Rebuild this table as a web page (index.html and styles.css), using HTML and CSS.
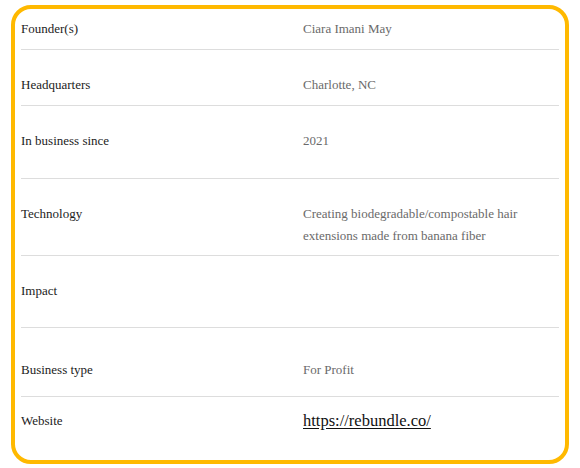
FILE: index.html
```html
<!DOCTYPE html>
<html lang="en">
<head>
<meta charset="utf-8">
<title>Rebundle</title>
<link rel="stylesheet" href="styles.css">
</head>
<body>
<div class="card">
  <div class="row r1"><div class="label">Founder(s)</div><div class="value">Ciara Imani May</div></div>
  <div class="row r2"><div class="label">Headquarters</div><div class="value">Charlotte, NC</div></div>
  <div class="row r3"><div class="label">In business since</div><div class="value">2021</div></div>
  <div class="row r4"><div class="label">Technology</div><div class="value">Creating biodegradable/compostable hair extensions made from banana fiber</div></div>
  <div class="row r5"><div class="label">Impact</div><div class="value"></div></div>
  <div class="row r6"><div class="label">Business type</div><div class="value">For Profit</div></div>
  <div class="row r7"><div class="label">Website</div><div class="value"><a class="link" href="#">https://rebundle.co/</a></div></div>
</div>
</body>
</html>
```
FILE: styles.css
```css
html, body { margin: 0; background: #fff; }
body {
  padding: 5px 11px;
  font-family: "Liberation Serif", "Times New Roman", serif;
}
.card {
  box-sizing: border-box;
  width: 558px;
  height: 459px;
  border: 4px solid #FFB900;
  border-radius: 20px;
  padding: 0 6px;
}
.row {
  box-sizing: border-box;
  display: grid;
  grid-template-columns: 282px 1fr;
  align-items: start;
  border-bottom: 1px solid #dddddd;
  font-size: 13px;
  line-height: 22px;
}
.label { color: #1c1c1c; }
.value { color: #6a6a6a; padding-right: 40px; }
.r1 { height: 41px; padding-top: 9px; }
.r2 { height: 56px; padding-top: 24px; }
.r3 { height: 73px; padding-top: 24px; }
.r4 { height: 77px; padding-top: 24px; }
.r5 { height: 72px; padding-top: 24px; }
.r6 { height: 69px; padding-top: 31px; }
.r7 { height: 63px; padding-top: 13px; border-bottom: none; }
.link {
  color: #111;
  font-size: 16.5px;
  text-decoration: underline;
  text-underline-offset: 2px;
}
```
